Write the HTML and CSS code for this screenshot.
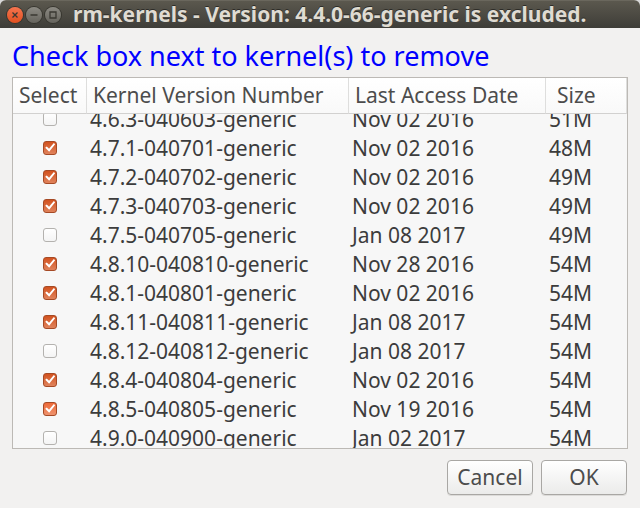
FILE: index.html
```html
<!DOCTYPE html>
<html lang="en">
<head>
<meta charset="utf-8">
<meta name="viewport" content="width=device-width, initial-scale=1">
<title>rm-kernels</title>
<link rel="stylesheet" href="styles.css">
</head>
<body>
<div class="window">
  <header class="titlebar">
    <div class="controls">
      <button class="control control-close" type="button" aria-label="Close">
        <svg viewBox="0 0 16 16"><path d="M5.5 5.5l5 5M10.5 5.5l-5 5"/></svg>
      </button>
      <button class="control" type="button" aria-label="Minimize">
        <svg viewBox="0 0 16 16"><path d="M4.5 8h7"/></svg>
      </button>
      <button class="control" type="button" aria-label="Maximize">
        <svg viewBox="0 0 16 16"><path d="M5 5h6v6H5z"/></svg>
      </button>
    </div>
    <h1 class="title">rm-kernels - Version: 4.4.0-66-generic is excluded.</h1>
  </header>
  <form class="dialog">
    <p class="prompt" id="prompt">Check box next to kernel(s) to remove</p>
    <div class="list">
      <table class="kernels" aria-labelledby="prompt">
        <colgroup><col class="col-select"><col class="col-name"><col class="col-date"><col></colgroup>
        <thead>
          <tr><th>Select</th><th>Kernel Version Number</th><th>Last Access Date</th><th class="size">Size</th></tr>
        </thead>
        <tbody>
          <tr><td><input class="check" type="checkbox" id="k1"></td><td><label for="k1">4.6.3-040603-generic</label></td><td>Nov 02 2016</td><td>51M</td></tr>
          <tr><td><input class="check" type="checkbox" id="k2" checked></td><td><label for="k2">4.7.1-040701-generic</label></td><td>Nov 02 2016</td><td>48M</td></tr>
          <tr><td><input class="check" type="checkbox" id="k3" checked></td><td><label for="k3">4.7.2-040702-generic</label></td><td>Nov 02 2016</td><td>49M</td></tr>
          <tr><td><input class="check" type="checkbox" id="k4" checked></td><td><label for="k4">4.7.3-040703-generic</label></td><td>Nov 02 2016</td><td>49M</td></tr>
          <tr><td><input class="check" type="checkbox" id="k5"></td><td><label for="k5">4.7.5-040705-generic</label></td><td>Jan 08 2017</td><td>49M</td></tr>
          <tr><td><input class="check" type="checkbox" id="k6" checked></td><td><label for="k6">4.8.10-040810-generic</label></td><td>Nov 28 2016</td><td>54M</td></tr>
          <tr><td><input class="check" type="checkbox" id="k7" checked></td><td><label for="k7">4.8.1-040801-generic</label></td><td>Nov 02 2016</td><td>54M</td></tr>
          <tr><td><input class="check" type="checkbox" id="k8" checked></td><td><label for="k8">4.8.11-040811-generic</label></td><td>Jan 08 2017</td><td>54M</td></tr>
          <tr><td><input class="check" type="checkbox" id="k9"></td><td><label for="k9">4.8.12-040812-generic</label></td><td>Jan 08 2017</td><td>54M</td></tr>
          <tr><td><input class="check" type="checkbox" id="k10" checked></td><td><label for="k10">4.8.4-040804-generic</label></td><td>Nov 02 2016</td><td>54M</td></tr>
          <tr><td><input class="check check-active" type="checkbox" id="k11" checked></td><td><label for="k11">4.8.5-040805-generic</label></td><td>Nov 19 2016</td><td>54M</td></tr>
          <tr><td><input class="check" type="checkbox" id="k12"></td><td><label for="k12">4.9.0-040900-generic</label></td><td>Jan 02 2017</td><td>54M</td></tr>
        </tbody>
      </table>
    </div>
    <div class="actions">
      <button class="action" type="button">Cancel</button>
      <button class="action" type="submit">OK</button>
    </div>
  </form>
</div>
<script src="script.js"></script>
</body>
</html>
```
FILE: styles.css
```css
* {
  box-sizing: border-box;
}

body {
  margin: 0;
  background: #d9d9d9;
  color: #3c3c3c;
  font: 21px/29px "Noto Sans", "Open Sans", sans-serif;
}

.window {
  display: flex;
  flex-direction: column;
  height: 100vh;
  background: #f2f1f0;
  border-radius: 6px 6px 0 0;
  overflow: hidden;
}

.titlebar {
  display: flex;
  align-items: center;
  gap: 12px;
  height: 28px;
  flex: none;
  padding-left: 7px;
  background: linear-gradient(#5b584e, #3e3d38);
  border-top: 1px solid #6a675d;
}

.controls {
  display: flex;
  gap: 3px;
}

.control {
  width: 16px;
  height: 16px;
  padding: 0;
  border: 0;
  border-radius: 50%;
  background: linear-gradient(#8c8a83, #66645d);
  box-shadow: 0 0 0 1px #37362f;
}

.control-close {
  background: linear-gradient(#f5744f, #e2501f);
}

.control svg {
  display: block;
  fill: none;
  stroke: #3a3832;
  stroke-width: 1.3;
}

.title {
  margin: 0;
  color: #dfdbd2;
  font-size: 21px;
  font-weight: 700;
  line-height: 27px;
  white-space: nowrap;
  text-shadow: 0 -1px #2d2c28;
}

.dialog {
  display: flex;
  flex-direction: column;
  flex: 1;
  min-height: 0;
  padding: 12px 12px 13px;
}

.prompt {
  margin: 0 0 5px;
  color: #00f;
  font-size: 27px;
  line-height: 32px;
  white-space: nowrap;
}

.list {
  flex: 1;
  min-height: 0;
  overflow: auto;
  scrollbar-width: none;
  background: #f7f7f7;
  border: 1px solid #bcb9b5;
}

.kernels {
  width: 100%;
  table-layout: fixed;
  border-collapse: separate;
  border-spacing: 0;
  white-space: nowrap;
}

.col-select {
  width: 74px;
}

.col-name {
  width: 262px;
}

.col-date {
  width: 197px;
}

th {
  position: sticky;
  top: 0;
  z-index: 1;
  height: 36px;
  padding: 0 0 0 6px;
  background: linear-gradient(#fff, #f9f9f9);
  border-right: 1px solid #dededd;
  border-bottom: 1px solid #d2d1d0;
  color: #4c4c4c;
  font-weight: 400;
  text-align: left;
}

th.size {
  padding-left: 11px;
}

td {
  height: 29px;
  padding: 0 0 0 3px;
}

td:first-child {
  padding: 0 0 2px;
  text-align: center;
}

.check {
  display: block;
  width: 14px;
  height: 14px;
  margin: 0 auto;
  appearance: none;
  background: linear-gradient(#fff, #f4f4f4);
  border: 1px solid #b4b2af;
  border-radius: 3px;
}

.check:checked {
  background: linear-gradient(#d2521f, #e0835c);
  border-color: #a64a25;
}

.check-active:checked {
  background: linear-gradient(#ee6a38, #ee936e);
}

.check:checked::before {
  content: "";
  display: block;
  height: 12px;
  background: #fff;
  clip-path: polygon(10% 53%, 23% 42%, 42% 61%, 82% 12%, 93% 22%, 43% 85%);
}

.actions {
  display: flex;
  justify-content: flex-end;
  gap: 8px;
  padding: 11px 1px 0 0;
}

.action {
  width: 86px;
  height: 35px;
  padding: 0;
  background: linear-gradient(#fff, #ebebea);
  border: 1px solid #a9a7a4;
  border-radius: 4px;
  box-shadow: 0 1px #dcdbd9;
  color: #4c4c4c;
  font: inherit;
}
```
FILE: script.js
```js
// Open the list part-way through its first row.
document.querySelector(".list").scrollTop = 9;
```
